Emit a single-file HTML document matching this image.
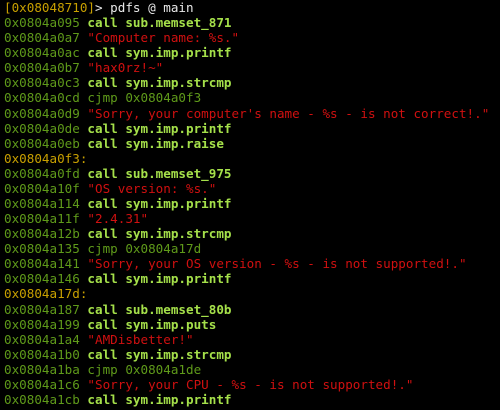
<!DOCTYPE html>
<html><head><style>
html,body{margin:0;padding:0;background:#000;width:500px;height:410px;overflow:hidden}
.w{padding:0 0 0 4px;font-family:"DejaVu Sans Mono","Liberation Mono",monospace;font-size:12.6px;color:#ddd}
.w div{height:15.08px;line-height:15.08px;white-space:pre;overflow:visible}
.a{color:#5f9a1a}.c{color:#a5e04a;font-weight:bold}.s{color:#d01010}.y{color:#c8a000}.j{color:#5f9a1a}.p{color:#e8e8e8}
</style></head><body><div class="w">
<div><span class="y">[0x08048710]</span><span class="p">&gt; pdfs @ main</span></div>
<div><span class="a">0x0804a095</span> <span class="c">call sub.memset_871</span></div>
<div><span class="a">0x0804a0a7</span> <span class="s">"Computer name: %s."</span></div>
<div><span class="a">0x0804a0ac</span> <span class="c">call sym.imp.printf</span></div>
<div><span class="a">0x0804a0b7</span> <span class="s">"hax0rz!~"</span></div>
<div><span class="a">0x0804a0c3</span> <span class="c">call sym.imp.strcmp</span></div>
<div><span class="a">0x0804a0cd</span> <span class="j">cjmp 0x0804a0f3</span></div>
<div><span class="a">0x0804a0d9</span> <span class="s">"Sorry, your computer's name - %s - is not correct!."</span></div>
<div><span class="a">0x0804a0de</span> <span class="c">call sym.imp.printf</span></div>
<div><span class="a">0x0804a0eb</span> <span class="c">call sym.imp.raise</span></div>
<div><span class="y">0x0804a0f3:</span></div>
<div><span class="a">0x0804a0fd</span> <span class="c">call sub.memset_975</span></div>
<div><span class="a">0x0804a10f</span> <span class="s">"OS version: %s."</span></div>
<div><span class="a">0x0804a114</span> <span class="c">call sym.imp.printf</span></div>
<div><span class="a">0x0804a11f</span> <span class="s">"2.4.31"</span></div>
<div><span class="a">0x0804a12b</span> <span class="c">call sym.imp.strcmp</span></div>
<div><span class="a">0x0804a135</span> <span class="j">cjmp 0x0804a17d</span></div>
<div><span class="a">0x0804a141</span> <span class="s">"Sorry, your OS version - %s - is not supported!."</span></div>
<div><span class="a">0x0804a146</span> <span class="c">call sym.imp.printf</span></div>
<div><span class="y">0x0804a17d:</span></div>
<div><span class="a">0x0804a187</span> <span class="c">call sub.memset_80b</span></div>
<div><span class="a">0x0804a199</span> <span class="c">call sym.imp.puts</span></div>
<div><span class="a">0x0804a1a4</span> <span class="s">"AMDisbetter!"</span></div>
<div><span class="a">0x0804a1b0</span> <span class="c">call sym.imp.strcmp</span></div>
<div><span class="a">0x0804a1ba</span> <span class="j">cjmp 0x0804a1de</span></div>
<div><span class="a">0x0804a1c6</span> <span class="s">"Sorry, your CPU - %s - is not supported!."</span></div>
<div><span class="a">0x0804a1cb</span> <span class="c">call sym.imp.printf</span></div>
</div></body></html>
